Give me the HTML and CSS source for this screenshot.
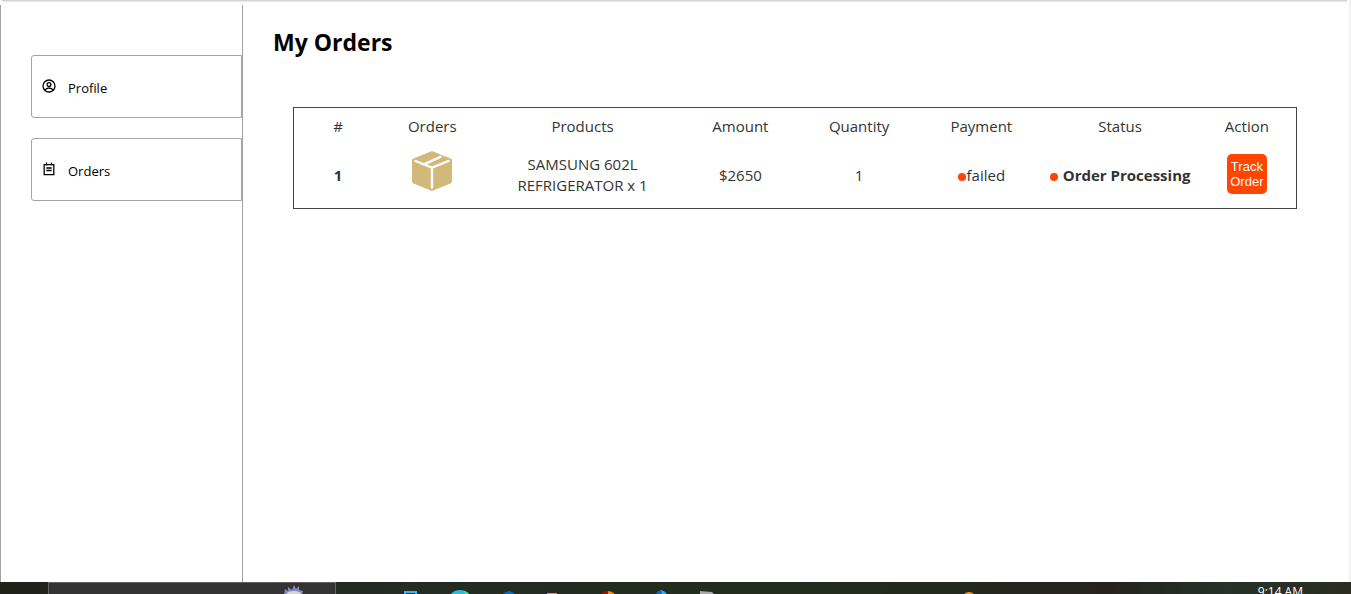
FILE: index.html
```html
<!DOCTYPE html>
<html lang="en">
<head>
<meta charset="utf-8">
<title>My Orders</title>
<link rel="stylesheet" href="styles.css">
</head>
<body>
<div class="page">
  <header class="topline"></header>
  <div class="account">
    <nav class="sidebar" aria-label="Account">
      <a class="side-link" href="#profile">
        <svg class="side-icon" viewBox="0 0 14 14" fill="none" stroke="#000" stroke-width="1.3">
          <circle cx="7" cy="7" r="6"/><circle cx="7" cy="5.5" r="1.9"/><path d="M3 11.2C3.8 9.6 5.2 9 7 9s3.2.6 4 2.2"/>
        </svg>
        <span>Profile</span>
      </a>
      <a class="side-link" href="#orders">
        <svg class="side-icon" viewBox="0 0 14 14" fill="none" stroke="#000" stroke-width="1.3">
          <path d="M2.2 2.6h9.6v10H2.2zM4.500.5v3M9.500.5v3M4.3 6h5.4M4.3 8.5h5.4"/>
        </svg>
        <span>Orders</span>
      </a>
    </nav>
    <main class="content">
      <h1 class="title">My Orders</h1>
      <table class="orders">
        <thead>
          <tr>
            <th class="c-num">#</th><th class="c-order">Orders</th><th class="c-product">Products</th><th class="c-amount">Amount</th><th class="c-qty">Quantity</th><th class="c-pay">Payment</th><th class="c-status">Status</th><th class="c-action">Action</th>
          </tr>
        </thead>
        <tbody>
          <tr>
            <td class="strong">1</td>
            <td>
              <svg class="box" viewBox="0 0 40 40" role="img" aria-label="Package">
                <path fill="#d3b979" d="M20 0 38.500 7.400Q40 8 40 9.500v21q0 1.500-1.500 2.100L20 40 1.500 32.600Q0 32 0 30.500v-21Q0 8 1.500 7.400z"/>
                <path fill="none" stroke="#fff" stroke-width="2.4" stroke-linecap="round" stroke-linejoin="round" d="M3.500 10 20 16.600 36.500 10M20 16.600V36.500M13 12.800 28.500 5.800"/>
              </svg>
            </td>
            <td class="product">SAMSUNG 602L REFRIGERATOR x 1</td>
            <td>$2650</td>
            <td>1</td>
            <td class="wide"><span class="dot"></span>failed</td>
            <td class="wide strong"><span class="dot dot-gap"></span>Order Processing</td>
            <td class="wide"><button class="track" type="button">Track Order</button></td>
          </tr>
        </tbody>
      </table>
    </main>
  </div>
</div>
<footer class="taskbar">
  <div class="search">
    <svg class="task-icon" viewBox="0 0 50 12">
      <path fill="#8889bd" d="M15 12 16 6l3 2V4l4 3 2-5 2 4 3-3v4l4 1-1 4z"/>
      <path fill="#d9d3dc" d="M17 12q1-4 8-4t8 4z"/>
    </svg>
  </div>
  <div class="apps">
    <svg class="task-icon" viewBox="0 0 50 12"><path fill="none" stroke="#35b5ed" stroke-width="2" d="M20 12V10h11v2"/></svg>
    <svg class="task-icon" viewBox="0 0 50 12"><path fill="#2fbdcb" d="M16 12q3-4 9-4t9 4z"/><path fill="#5bd88c" d="M29 9q4 1 5 3h-4z"/></svg>
    <svg class="task-icon" viewBox="0 0 50 12"><path fill="#1269b8" d="M18 12q4-3 6-3t6 3z"/></svg>
    <svg class="task-icon" viewBox="0 0 50 12"><path fill="#d29b3c" d="M12 11h10v1H12z"/></svg>
    <svg class="task-icon" viewBox="0 0 50 12"><path fill="#91160c" d="M16 12q3-3 7-3v3z"/><path fill="#ef8b16" d="M23 9q4 0 7 3h-7z"/></svg>
    <svg class="task-icon" viewBox="0 0 50 12"><path fill="#1269b8" d="M21 12q2-4 6-4v4z"/><path fill="#39abed" d="M26 8q4 1 6 4h-5z"/></svg>
    <svg class="task-icon" viewBox="0 0 50 12"><path fill="#aaa" d="M15 9l12 1 2 2H15z"/></svg>
  </div>
  <div class="tray">
    <svg class="task-icon" viewBox="0 0 50 12"><path fill="#e69534" d="M20 12q2-2 5-2t5 2z"/></svg>
    <time class="clock">9:14 AM</time>
  </div>
</footer>
</body>
</html>
```
FILE: styles.css
```css
* {
  box-sizing: border-box;
}

body {
  margin: 0;
  height: 100vh;
  display: flex;
  flex-direction: column;
  overflow: hidden;
  background: #fff;
  color: #000;
  font-family: "Segoe UI", "Open Sans", "Noto Sans", sans-serif;
}

.page {
  flex: 1;
  min-height: 0;
  display: flex;
  flex-direction: column;
  border-right: 2px solid #f1f1f1;
}

.topline {
  height: 1px;
  margin: 0 2px 4px;
  background: #d3d3d3;
  box-shadow: 0 0 2px #aaa;
}

.account {
  flex: 1;
  display: flex;
}

.sidebar {
  width: 243px;
  padding: 50px 0 0 30px;
  border: solid #a3a3a3;
  border-width: 0 1px;
  display: flex;
  flex-direction: column;
  gap: 20px;
}

.side-link {
  height: 63px;
  padding: 2px 10px 0;
  border: 1px solid #a3a3a3;
  border-radius: 3px 0 0 3px;
  display: flex;
  align-items: center;
  gap: 12px;
  color: #000;
  font-size: 13px;
  text-decoration: none;
}

.side-icon {
  width: 14px;
  height: 14px;
  margin-bottom: 4px;
}

.content {
  flex: 1;
  padding: 21px 52px 0 30px;
}

.title {
  margin: 0;
  font-size: 23px;
  line-height: 32px;
}

.orders {
  width: calc(100% - 20px);
  margin: 49px 0 0 20px;
  border: 1px solid #444;
  border-spacing: 0;
  table-layout: fixed;
  color: #333;
  font-size: 15px;
  line-height: 21px;
  text-align: center;
}

.orders th {
  height: 38px;
  padding: 0 0 2px;
  font-weight: 400;
}

.orders td {
  height: 62px;
  padding: 0 30px 3px;
  white-space: nowrap;
}

.orders .product {
  padding-bottom: 5px;
  white-space: normal;
}

.orders .wide {
  padding: 0 0 3px;
}

.orders .strong {
  font-weight: 700;
}

.c-num { width: 8.8%; }
.c-order { width: 10%; }
.c-product { width: 20%; }
.c-amount { width: 11.5%; }
.c-qty { width: 12.2%; }
.c-pay { width: 12.2%; }
.c-status { width: 15.5%; }
.c-action { width: 9.8%; }

.box {
  display: block;
  width: 40px;
  height: 40px;
  margin: 0 auto 10px;
}

.dot {
  display: inline-block;
  width: 8px;
  height: 8px;
  margin-right: 1px;
  border-radius: 50%;
  background: #ff4500;
}

.dot-gap {
  margin-right: 5px;
}

.track {
  display: block;
  width: 40px;
  height: 40px;
  margin: 0 auto 4px;
  padding: 0;
  border: 0;
  border-radius: 5px;
  background: #ff4500;
  color: #fff;
  font: 13px/15px "Liberation Sans", Arial, sans-serif;
  white-space: normal;
}

.taskbar {
  height: 12px;
  padding-left: 48px;
  display: flex;
  overflow: hidden;
  background: linear-gradient(90deg, #202119, #252b26 30%, #222d1c 60%, #26231f 82%, #24312a 90%, #2c2d20);
}

.search {
  width: 288px;
  padding-right: 16px;
  display: flex;
  justify-content: flex-end;
  border: 1px solid #626262;
  border-bottom: 0;
  background: #333;
}

.task-icon {
  flex: none;
  width: 50px;
  height: 12px;
}

.apps {
  margin-left: 49px;
  display: flex;
}

.tray {
  margin-left: auto;
  padding-right: 48px;
  display: flex;
  gap: 264px;
}

.clock {
  padding-top: 2px;
  color: #fff;
  font-size: 12px;
  line-height: 16px;
  white-space: nowrap;
}
```
